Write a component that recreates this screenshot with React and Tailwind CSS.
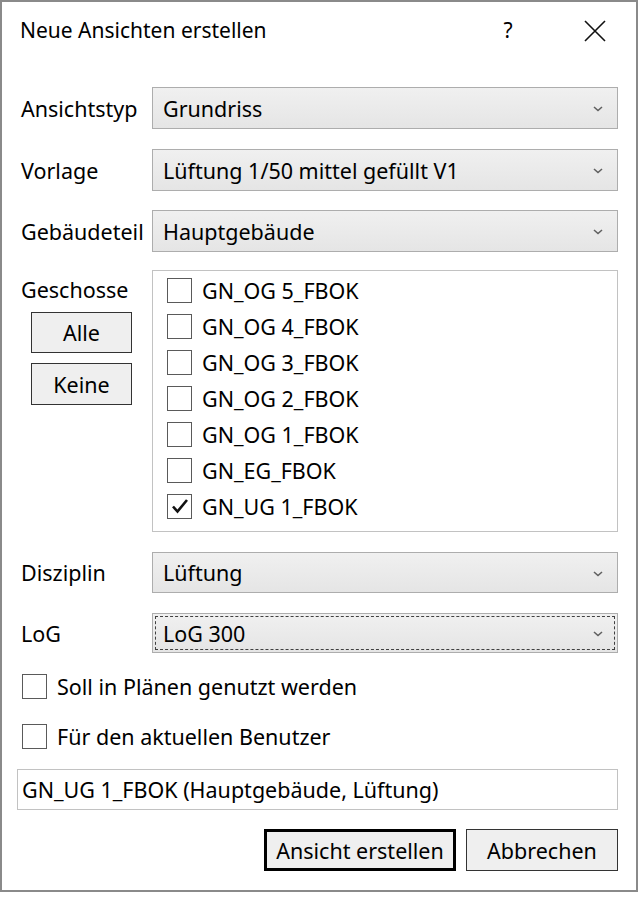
import React from 'react';

const font = { fontFamily: '"Noto Sans", "Open Sans", sans-serif' };

const Chevron = () => (
    <svg width="10" height="6" viewBox="0 0 10 6" className="shrink-0 mt-[2px]">
        <path d="M1 1 L5 4.5 L9 1" fill="none" stroke="#606060" strokeWidth="1.6" />
    </svg>
);

const Combo = ({ value, focused, h = 'h-[42px]' }) => (
    <div className={`relative flex-1 ${h} flex items-center pl-[10px] pr-[14px] border border-[#adadad] bg-gradient-to-b from-[#f0f0f0] to-[#e5e5e5]`}>
        <span className="flex-1 text-black pt-[2px]">{value}</span>
        <Chevron />
        {focused && <div className="absolute inset-[2px] border border-dashed border-[#404040] pointer-events-none" />}
    </div>
);

const Row = ({ label, children, className = '' }) => (
    <div className={`flex items-center ${className}`}>
        <div className="w-[135px] pl-[4px] pt-[2px] shrink-0">{label}</div>
        {children}
    </div>
);

const Box = ({ checked }) => (
    <div className="w-[25px] h-[25px] border-[1.5px] border-[#5a5a5a] bg-white flex items-center justify-center shrink-0">
        {checked && (
            <svg width="18" height="16" viewBox="0 0 18 16">
                <path d="M2 8.5 L6.5 13.5 L16 2" fill="none" stroke="#111" strokeWidth="2.6" />
            </svg>
        )}
    </div>
);

const floors = [
    { name: 'GN_OG 5_FBOK' },
    { name: 'GN_OG 4_FBOK' },
    { name: 'GN_OG 3_FBOK' },
    { name: 'GN_OG 2_FBOK' },
    { name: 'GN_OG 1_FBOK' },
    { name: 'GN_EG_FBOK' },
    { name: 'GN_UG 1_FBOK', checked: true },
];

export default function App() {
    return (
        <div className="bg-white w-[639px] h-[900px] text-[21.5px] text-black" style={font}>
            <div className="w-[638px] h-[892px] border-2 border-[#8a8a8a] flex flex-col">
                {/* Titelleiste */}
                <div className="h-[58px] flex items-center pl-[18px] pr-[30px] shrink-0">
                    <span className="flex-1 text-[21px]">Neue Ansichten erstellen</span>
                    <span className="w-[20px] text-center mr-[66px] text-[21px]">?</span>
                    <svg width="22" height="22" viewBox="0 0 22 22">
                        <path d="M1 1 L21 21 M21 1 L1 21" stroke="#111" strokeWidth="1.6" />
                    </svg>
                </div>

                <div className="flex flex-col pl-[15px] pr-[18px] pt-[27px]">
                    <Row label="Ansichtstyp">
                        <Combo value="Grundriss" />
                    </Row>
                    <Row label="Vorlage" className="mt-[20px]">
                        <Combo value="Lüftung 1/50 mittel gefüllt V1" />
                    </Row>
                    <Row label="Gebäudeteil" className="mt-[19px]">
                        <Combo value="Hauptgebäude" />
                    </Row>

                    {/* Geschosse */}
                    <div className="flex mt-[18px]">
                        <div className="w-[135px] pl-[4px] shrink-0 flex flex-col">
                            <div className="mt-[6px] leading-[28px]">Geschosse</div>
                            <button className="mt-[8px] ml-[10px] w-[101px] h-[41px] border-[1.5px] border-[#333] bg-[#efefef] pt-[2px]">Alle</button>
                            <button className="mt-[10px] ml-[10px] w-[101px] h-[42px] border-[1.5px] border-[#333] bg-[#efefef] pt-[2px]">Keine</button>
                        </div>
                        <div className="flex-1 h-[262px] border border-[#c2c2c2] pt-[1px] pl-[14px]">
                            {floors.map((f) => (
                                <div key={f.name} className="h-[36px] flex items-center gap-[10px]">
                                    <Box checked={f.checked} />
                                    <span className="pt-[2px]">{f.name}</span>
                                </div>
                            ))}
                        </div>
                    </div>

                    <Row label="Disziplin" className="mt-[20px]">
                        <Combo value="Lüftung" h="h-[41px]" />
                    </Row>
                    <Row label="LoG" className="mt-[20px]">
                        <Combo value="LoG 300" h="h-[40px]" focused />
                    </Row>

                    <div className="flex items-center gap-[10px] ml-[5px] mt-[20px] h-[26px]">
                        <Box />
                        <span className="pt-[2px]">Soll in Plänen genutzt werden</span>
                    </div>
                    <div className="flex items-center gap-[10px] ml-[5px] mt-[24px] h-[26px]">
                        <Box />
                        <span className="pt-[2px]">Für den aktuellen Benutzer</span>
                    </div>

                    <div className="mt-[20px] h-[41px] border border-[#c2c2c2] flex items-center pl-[4px] pt-[2px]">
                        GN_UG 1_FBOK (Hauptgebäude, Lüftung)
                    </div>

                    <div className="mt-[19px] flex justify-end gap-[10px]">
                        <button className="w-[192px] h-[42px] border-[3px] border-black bg-[#efefef] pt-[2px]">Ansicht erstellen</button>
                        <button className="w-[152px] h-[42px] border-[1.5px] border-[#333] bg-[#efefef] pt-[2px]">Abbrechen</button>
                    </div>
                </div>
            </div>
        </div>
    );
}
